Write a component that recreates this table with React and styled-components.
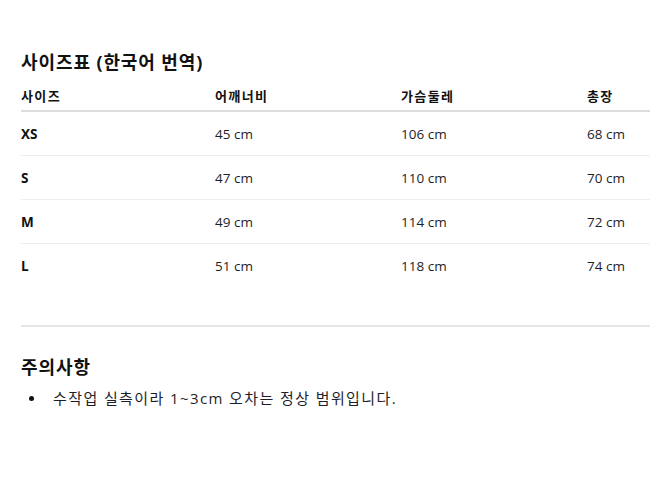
import React from 'react';
import styled, { createGlobalStyle } from 'styled-components';

const GlobalStyle = createGlobalStyle`
  html, body {
    margin: 0;
    padding: 0;
    background: #ffffff;
  }
  body {
    font-family: "Open Sans", "Noto Sans CJK KR", sans-serif;
    color: #222222;
    overflow: hidden;
  }
`;

const Page = styled.div`
  width: 650px;
  height: 478px;
  padding: 50px 0 0 21px;
  box-sizing: border-box;
  overflow: hidden;
`;

const Title = styled.h2`
  margin: 0;
  font-size: 18px;
  line-height: 24px;
  font-weight: 700;
  letter-spacing: 0.9px;
  color: #111111;
`;

const Table = styled.div`
  width: 629px;
  margin-top: 8px;
`;

const Row = styled.div`
  display: grid;
  grid-template-columns: 194px 186px 186px 1fr;
  align-items: center;
  height: ${({ $head }) => ($head ? '28px' : '43px')};
  border-bottom: ${({ $head, $last }) =>
    $head ? '2px solid #dddddd' : $last ? 'none' : '1px solid #eeeeee'};
`;

const Cell = styled.div`
  font-size: ${({ $head }) => ($head ? '13px' : '13.5px')};
  line-height: 18px;
  font-weight: ${({ $bold }) => ($bold ? 700 : 400)};
  letter-spacing: ${({ $head }) => ($head ? '1.4px' : '0')};
  color: ${({ $bold }) => ($bold ? '#111111' : '#1e1e2a')};
`;

const Divider = styled.hr`
  margin: 38px 0 0;
  width: 629px;
  border: none;
  border-top: 2px solid #e5e5e5;
`;

const NoteTitle = styled(Title)`
  margin-top: 28px;
`;

const NoteList = styled.ul`
  margin: 8px 0 0;
  padding: 0 0 0 8px;
  list-style: none;
`;

const NoteItem = styled.li`
  display: flex;
  align-items: center;
  font-size: 15px;
  line-height: 22px;
  letter-spacing: 1.4px;
  color: #1e1e2a;

  &::before {
    content: '';
    flex: none;
    width: 5px;
    height: 5px;
    border-radius: 50%;
    background: #111111;
    margin-right: 19px;
  }
`;

const headers = ['사이즈', '어깨너비', '가슴둘레', '총장'];
const rows = [
  ['XS', '45 cm', '106 cm', '68 cm'],
  ['S', '47 cm', '110 cm', '70 cm'],
  ['M', '49 cm', '114 cm', '72 cm'],
  ['L', '51 cm', '118 cm', '74 cm'],
];

export default function App() {
  return (
    <Page>
      <GlobalStyle />
      <Title>사이즈표 (한국어 번역)</Title>
      <Table>
        <Row $head>
          {headers.map((h) => (
            <Cell key={h} $bold $head>{h}</Cell>
          ))}
        </Row>
        {rows.map((r, i) => (
          <Row key={r[0]} $last={i === rows.length - 1}>
            {r.map((c, j) => (
              <Cell key={j} $bold={j === 0}>{c}</Cell>
            ))}
          </Row>
        ))}
      </Table>
      <Divider />
      <NoteTitle>주의사항</NoteTitle>
      <NoteList>
        <NoteItem>수작업 실측이라 1~3cm 오차는 정상 범위입니다.</NoteItem>
      </NoteList>
    </Page>
  );
}
